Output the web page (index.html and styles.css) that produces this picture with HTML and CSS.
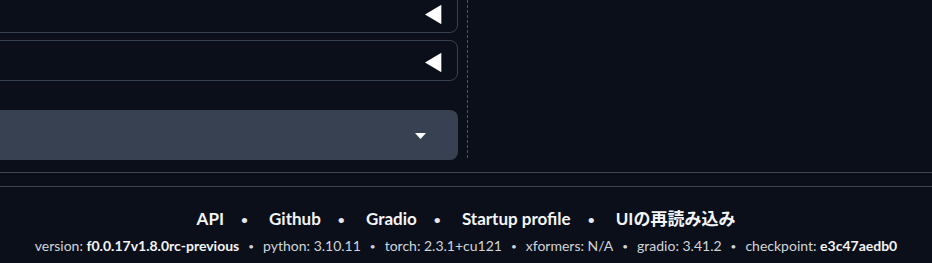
FILE: index.html
```html
<!DOCTYPE html>
<html lang="ja">
<head>
    <meta charset="UTF-8">
    <meta name="viewport" content="width=device-width, initial-scale=1.0">
    <title>Forge</title>
    <link rel="stylesheet" href="styles.css">
</head>
<body>
    <div class="main">
        <div class="left-col">
            <div class="field-box">
                <span class="collapse-arrow">
                    <svg width="17" height="19" viewBox="0 0 17 19"><polygon points="0,9.5 16,0 16,19" fill="#fff"/><rect x="16" y="0" width="1" height="19" fill="#b3362f"/></svg>
                </span>
            </div>
            <div class="field-box">
                <span class="collapse-arrow">
                    <svg width="17" height="19" viewBox="0 0 17 19"><polygon points="0,9.5 16,0 16,19" fill="#fff"/><rect x="16" y="0" width="1" height="19" fill="#b3362f"/></svg>
                </span>
            </div>
            <div class="dropdown">
                <svg class="dropdown-caret" width="11" height="6" viewBox="0 0 11 6"><polygon points="0,0 11,0 5.5,6" fill="#fff"/></svg>
            </div>
        </div>
        <div class="splitter"></div>
    </div>

    <div class="footer-divider"></div>

    <div class="footer">
        <div class="footer-links">
            <a href="#">API</a><span class="sep">•</span>
            <a href="#">Github</a><span class="sep">•</span>
            <a href="#">Gradio</a><span class="sep">•</span>
            <a href="#">Startup profile</a><span class="sep">•</span>
            <a href="#">UIの再読み込み</a>
        </div>
        <div class="versions">
            version: <b>f0.0.17v1.8.0rc-previous</b><span class="vsep">•</span>python: 3.10.11<span class="vsep">•</span>torch: 2.3.1+cu121<span class="vsep">•</span>xformers: N/A<span class="vsep">•</span>gradio: 3.41.2<span class="vsep">•</span>checkpoint: <b>e3c47aedb0</b>
        </div>
    </div>
</body>
</html>
```

FILE: styles.css
```css
body {
    margin: 0;
    background-color: #0b0f19;
    font-family: "Lato", "Noto Sans CJK JP", sans-serif;
    color: #e5e7eb;
    overflow: hidden;
}
.main {
    display: flex;
    height: 160px;
}
.left-col {
    width: 470px;
    margin-left: -12px;
    margin-top: -8px;
    display: flex;
    flex-direction: column;
    gap: 7px;
}
.field-box {
    height: 39px;
    border: 1px solid #374151;
    border-radius: 8px;
    display: flex;
    align-items: center;
    justify-content: flex-end;
    padding-right: 15px;
}
.collapse-arrow {
    display: flex;
    margin-top: 3px;
}
.dropdown {
    margin-top: 22px;
    height: 50px;
    background-color: #374151;
    border-radius: 8px;
    display: flex;
    align-items: center;
    justify-content: flex-end;
    padding-right: 32px;
}
.dropdown-caret {
    margin-top: 2px;
}
.splitter {
    margin-left: 9px;
    border-left: 1px dashed #4b5563;
    height: 158px;
}
.footer-divider {
    margin-top: 12px;
    height: 13px;
    border-top: 1px solid #3f4451;
    border-bottom: 1px solid #3f4451;
}
.footer {
    text-align: center;
    padding-top: 21px;
}
.footer-links {
    font-size: 17px;
    font-weight: 700;
    line-height: 22px;
}
.footer-links a {
    color: #f3f4f6;
    text-decoration: none;
}
.sep {
    font-size: 12px;
    padding: 0 17px;
    vertical-align: 1px;
}
.versions {
    margin-top: 6px;
    font-size: 14px;
    line-height: 18px;
    color: #d1d5db;
}
.versions b {
    color: #f3f4f6;
}
.vsep {
    font-size: 10px;
    padding: 0 9px;
    vertical-align: 1px;
}
```
